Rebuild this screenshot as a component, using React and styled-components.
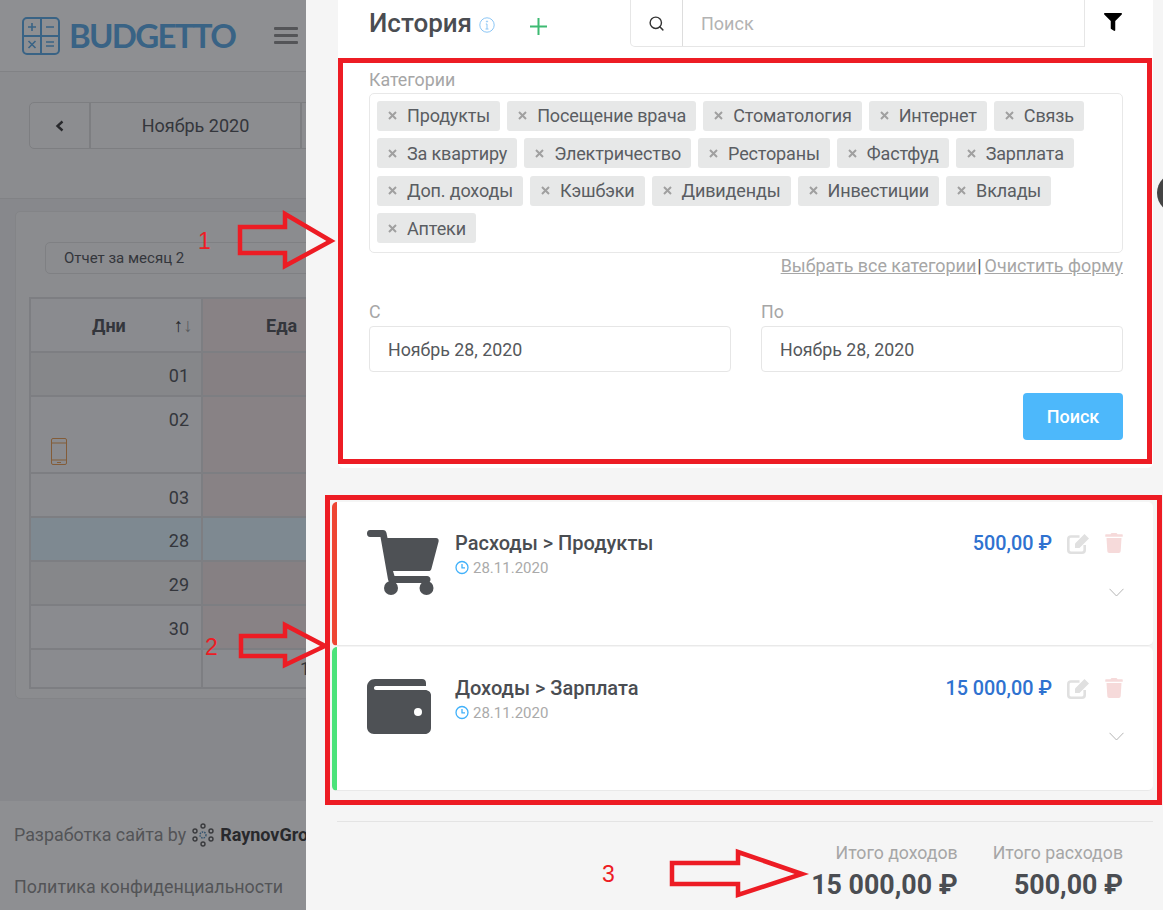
import React from "react";
import styled, { createGlobalStyle } from "styled-components";
import { FaFilter, FaTrash } from "react-icons/fa";
import { FiSearch } from "react-icons/fi";

const Global = createGlobalStyle`
  html, body { margin: 0; padding: 0; height: 910px; overflow: hidden; background: #f5f5f5; }
  body { font-family: Roboto, "Liberation Sans", sans-serif; color: #4a4d52; }
  * { box-sizing: border-box; }
`;

const Page = styled.div`
  position: relative;
  display: flex;
  width: 1163px;
  height: 910px;
  overflow: hidden;
`;

/* ---------- dimmed page behind the drawer ---------- */
const Behind = styled.div`
  position: relative;
  flex: 0 0 306px;
  height: 910px;
  overflow: hidden;
  background: #f0f1f3;
`;
const Dim = styled.div`
  position: absolute;
  inset: 0;
  background: rgba(30, 32, 38, 0.5);
`;
const BehindInner = styled.div`
  width: 1163px;
  height: 910px;
  display: flex;
  flex-direction: column;
`;
const TopBar = styled.header`
  height: 72px;
  background: #fff;
  border-bottom: 1px solid #e4e4e4;
  display: flex;
  align-items: center;
  padding-left: 22px;
`;
const Brand = styled.span`
  font-family: Lato, sans-serif;
  font-weight: 700;
  font-size: 33px;
  line-height: 1;
  color: #54a6e4;
  margin-left: 9px;
  letter-spacing: -1.7px;
`;
const Burger = styled.span`
  margin-left: 39px;
  width: 24px;
  display: flex;
  flex-direction: column;
  gap: 4px;
  i { display: block; height: 3px; background: #8b8b8b; border-radius: 1px; }
`;
const DateBand = styled.section`
  height: 127px;
  background: #f8f8f8;
  border-bottom: 1px solid #e4e4e4;
  padding: 30px 0 0 29px;
`;
const Pager = styled.div`
  display: inline-flex;
  height: 47px;
  background: #fafafa;
  border: 1px solid #dcdcdc;
  border-radius: 5px;
  font-size: 18px;
`;
const PagerCell = styled.span`
  width: ${(p) => p.$w}px;
  display: flex;
  align-items: center;
  justify-content: center;
  border-right: 2px solid #dcdcdc;
`;
const Content = styled.main`
  flex: 1;
  padding: 12px 0 0 15px;
`;
const ReportCard = styled.div`
  width: 900px;
  height: 488px;
  background: #f8f8f8;
  border: 1px solid #e8e8e8;
  border-radius: 5px;
  padding: 30px 15px 0 13px;
`;
const ReportSelect = styled.div`
  width: 400px;
  height: 32px;
  margin-left: 16px;
  border: 1px solid #e0e0e0;
  border-radius: 5px;
  font-size: 15px;
  line-height: 31px;
  padding-left: 18px;
`;
const Table = styled.div`
  margin-top: 23px;
  display: grid;
  grid-template-columns: 170px 300px;
  gap: 2px;
  background: #dcdcdf;
  width: 476px;
  border: 2px solid #dcdcdf;
`;
const DayCell = styled.div`
  height: ${(p) => p.$h}px;
  background: ${(p) => p.$bg};
  font-size: 18px;
  text-align: right;
  padding: ${(p) => p.$pad}px 12px 0 0;
  line-height: 22px;
  position: relative;
`;
const TotalDigit = styled.span`
  display: block;
  text-align: left;
  padding-left: 97px;
`;
const HeadCell = styled.div`
  height: 52px;
  background: ${(p) => p.$bg};
  font-size: 18px;
  font-weight: 700;
  display: flex;
  align-items: center;
  padding-left: ${(p) => p.$pad}px;
`;
const SortMark = styled.span`
  margin-left: 48px;
  font-size: 19px;
  font-weight: 400;
  color: #333;
  span { color: #999; }
`;
const PhoneMark = styled.svg`
  position: absolute;
  left: 20px;
  top: 41px;
`;
const BottomBar = styled.footer`
  height: 109px;
  background: #fff;
  padding: 22px 0 0 14px;
  font-size: 17.85px;
  color: #888;
  line-height: 24px;
`;
const ByLine = styled.div`
  display: flex;
  align-items: center;
  white-space: nowrap;
  strong { color: #333; font-weight: 700; margin-left: 6px; font-size: 18px; }
  svg { margin-left: 6px; }
`;
const Policy = styled.div`
  margin-top: 28px;
  white-space: nowrap;
`;

/* ---------- drawer ---------- */
const Drawer = styled.aside`
  flex: 1;
  height: 910px;
  background: #f5f5f5;
  padding: 0 10px 0 32px;
  display: flex;
  flex-direction: column;
`;
const Panel = styled.section`
  height: 468px;
  background: #fff;
  border-radius: 0 0 5px 5px;
  padding: 0 30px 0 31px;
`;
const PanelHead = styled.div`
  height: 47px;
  display: flex;
  align-items: center;
`;
const Title = styled.h2`
  margin: 0;
  font-size: 26px;
  font-weight: 500;
  color: #4a4d52;
  line-height: 47px;
`;
const InfoIcon = styled.svg`
  margin-left: 7px;
  margin-top: 3px;
`;
const PlusIcon = styled.svg`
  margin-left: 34px;
  margin-top: 6px;
`;
const SearchGroup = styled.div`
  margin-left: 82px;
  width: 455px;
  height: 47px;
  display: flex;
  border: 1px solid #e6e6e6;
  border-top: none;
  border-radius: 0 0 0 5px;
`;
const SearchAddon = styled.span`
  width: 52px;
  flex: none;
  border-right: 1px solid #ddd;
  display: flex;
  align-items: center;
  justify-content: center;
  color: #333;
`;
const SearchHint = styled.span`
  padding-left: 18px;
  font-size: 18px;
  line-height: 47px;
  color: #b3b3b3;
`;
const FilterBtn = styled.span`
  margin-left: 19px;
  color: #000;
  display: flex;
  margin-top: -3px;
`;
const FieldLabel = styled.label`
  display: block;
  font-size: 17.8px;
  line-height: 20px;
  color: #a6a6a6;
`;
const CatLabel = styled(FieldLabel)`
  margin-top: 23px;
  margin-bottom: 3px;
`;
const Chips = styled.div`
  height: 160px;
  border: 1px solid #e8e8e8;
  border-radius: 5px;
  padding: 6.8px 7px 0;
  display: flex;
  flex-wrap: wrap;
  align-content: flex-start;
  gap: 7.5px 7px;
`;
const Chip = styled.span`
  height: 30px;
  display: inline-flex;
  align-items: center;
  background: #e7e8e8;
  border-radius: 3px;
  padding: 0 10px 0 11px;
  font-size: 18px;
  letter-spacing: -0.008em;
  color: #5a5d62;
  white-space: nowrap;
  svg { margin-right: 10px; }
`;
const LinksRow = styled.div`
  margin-top: 3px;
  display: flex;
  justify-content: flex-end;
  font-size: 17.9px;
  line-height: 20px;
  color: #a6a6a6;
  a { color: #a6a6a6; text-decoration: underline; }
  b { color: #555; font-weight: 400; margin: 0 3px 0 1px; }
`;
const DatesRow = styled.div`
  margin-top: 26px;
  display: grid;
  grid-template-columns: 362px 362px;
  column-gap: 30px;
`;
const DateInput = styled.div`
  margin-top: 4px;
  height: 46px;
  border: 1px solid #e6e6e6;
  border-radius: 4px;
  padding-left: 18px;
  font-size: 17.8px;
  line-height: 45px;
  color: #55585c;
`;
const SubmitRow = styled.div`
  margin-top: 21px;
  display: flex;
  justify-content: flex-end;
`;
const Submit = styled.button`
  width: 100px;
  height: 47px;
  border: none;
  border-radius: 4px;
  background: #4db8fb;
  color: #fff;
  font: 500 18px Roboto, sans-serif;
`;
const List = styled.div`
  margin: 34px 0 0 -6px;
  display: flex;
  flex-direction: column;
`;
const Entry = styled.article`
  height: ${(p) => p.$h}px;
  margin-top: ${(p) => p.$mt || 0}px;
  background: #fff;
  border-left: 5px solid ${(p) => p.$accent};
  border-radius: 5px;
  border-bottom: 1px solid #e9e9e9;
  display: flex;
  padding: 0 29px 0 0;
`;
const EntryIcon = styled.div`
  width: 118px;
  flex: none;
  padding: ${(p) => p.$top}px 0 0 30px;
`;
const EntryMain = styled.div`
  flex: 1;
  padding-top: ${(p) => p.$top}px;
`;
const EntryTitle = styled.div`
  font-size: 20px;
  font-weight: 500;
  line-height: 24px;
  color: #4a4d52;
`;
const EntryDate = styled.div`
  margin-top: 0.5px;
  display: flex;
  align-items: center;
  gap: 4px;
  font-size: 15px;
  line-height: 24px;
  color: #aaa;
`;
const EntrySide = styled.div`
  width: 200px;
  padding-top: ${(p) => p.$top}px;
  display: flex;
  flex-direction: column;
  align-items: flex-end;
`;
const SideTop = styled.div`
  display: flex;
  align-items: center;
  height: 24px;
`;
const Amount = styled.span`
  font-size: 19.8px;
  font-weight: 500;
  color: #2f72d0;
  white-space: nowrap;
`;
const EditBtn = styled.span`
  display: flex;
  margin-left: 15px;
`;
const TrashBtn = styled.span`
  display: flex;
  margin-left: 14px;
  color: #f6dada;
`;
const Chevron = styled.svg`
  margin-top: ${(p) => p.$mt}px;
`;
const Totals = styled.div`
  margin: 30px 0 0 -1px;
  border-top: 1px solid #e4e4e4;
  padding: 20px 30px 0 0;
  display: flex;
  justify-content: flex-end;
  gap: 35px;
`;
const TotalCol = styled.div`
  text-align: right;
`;
const TotalLabel = styled.div`
  font-size: 17.7px;
  line-height: 22px;
  color: #a6a6a6;
`;
const TotalValue = styled.div`
  margin-top: 6px;
  font-size: 26.8px;
  font-weight: 700;
  line-height: 30px;
  color: #4a4d52;
  white-space: nowrap;
`;

/* ---------- things lying over the page ---------- */
const Frame = styled.div`
  position: absolute;
  left: ${(p) => p.$x}px;
  top: ${(p) => p.$y}px;
  width: ${(p) => p.$w}px;
  height: ${(p) => p.$h}px;
  border: 5px solid #ed1c24;
  pointer-events: none;
`;
const Numeral = styled.span`
  position: absolute;
  left: ${(p) => p.$x}px;
  top: ${(p) => p.$y}px;
  font-family: "Liberation Sans", sans-serif;
  font-size: 23px;
  line-height: 26px;
  color: #ed1c24;
`;
const Arrows = styled.svg`
  position: absolute;
  inset: 0;
  pointer-events: none;
`;
const Knob = styled.div`
  position: absolute;
  left: 1157px;
  top: 173px;
  width: 40px;
  height: 40px;
  border-radius: 50%;
  background: #444;
`;

const Logo = () => (
  <svg width="38" height="38" viewBox="0 0 38 38" fill="none" stroke="#54a6e4" strokeWidth="1.6">
    <rect x="1" y="1" width="36" height="36" rx="4" strokeWidth="2" />
    <path d="M19 1V37M1 19H37" strokeWidth="2" />
    <path d="M6 10H14M10 6V14M24 10H32M6.5 24L13.5 31M13.5 24L6.5 31M24 25H32M24 29H32" />
  </svg>
);
const Cross = () => (
  <svg width="9" height="9" viewBox="0 0 9 9" stroke="#a0a0a0" strokeWidth="2">
    <path d="M1 1L8 8M8 1L1 8" />
  </svg>
);
const Clock = () => (
  <svg width="14" height="15" viewBox="0 0 14 15" fill="none" stroke="#41b1fa" strokeWidth="1.3">
    <circle cx="7" cy="7.5" r="6" />
    <path d="M7 4V7.8H10" />
  </svg>
);
const ChevronDown = ({ mt }) => (
  <Chevron $mt={mt} width="15" height="9" viewBox="0 0 15 9" fill="none" stroke="#b5b5b5" strokeWidth="1">
    <path d="M0.5 0.8L7.5 8L14.5 0.8" />
  </Chevron>
);
const EditIcon = () => (
  <svg width="23" height="21" viewBox="0 0 23 21" fill="none">
    <path d="M12.500 3.500H4C2.500 3.500 1.300 4.700 1.300 6.200V17C1.300 18.500 2.500 19.700 4 19.700H15C16.500 19.700 17.700 18.500 17.700 17V12" stroke="#e0e0e0" strokeWidth="2.600" />
    <path d="M8 10.500L17.500 1L22 5.500L12.500 15H8Z" fill="#e0e0e0" />
  </svg>
);
const Cart = () => (
  <svg width="72" height="65" viewBox="0 0 72 65" fill="#4e5155">
    <path d="M3 0H16C18 0 19 1 19.5 3L20.5 8H69C71 8 72 9.5 71.6 11.5L64.5 38.5C64 40.5 63 41 61.5 41H26L27.5 46H60C62 46 63.5 47.5 63.5 49.5C63.5 51.5 62 53 60 53H25C23 53 21.5 52 21 49.5L13.5 7H3C1 7 0 5.5 0 3.5C0 1.5 1 0 3 0Z" />
    <circle cx="24" cy="58" r="7" />
    <circle cx="59.500" cy="58" r="7" />
  </svg>
);
const Wallet = () => (
  <svg width="64" height="55" viewBox="0 0 64 55" fill="#4e5155">
    <path d="M8 0H55C57.500 0 59 1.500 59 4V7H9C7.500 7 7 8 7 9C7 10 7.500 11 9 11H58C61.500 11 64 13.500 64 16V49C64 52.500 61.500 55 58 55H7C3 55 0 52 0 48V8C0 3.500 3.500 0 8 0Z" />
    <circle cx="51" cy="33" r="4" fill="#fff" />
  </svg>
);
const Group = () => (
  <svg width="22" height="24" viewBox="0 0 22 24" fill="none" stroke="#555" strokeWidth="1.4">
    <circle cx="11" cy="3" r="2" /><circle cx="11" cy="21" r="2" />
    <circle cx="3" cy="8" r="2" /><circle cx="19" cy="8" r="2" />
    <circle cx="3" cy="16" r="2" /><circle cx="19" cy="16" r="2" />
    <circle cx="11" cy="12" r="3" stroke="#4a88b8" strokeDasharray="1.5 1" />
  </svg>
);

const chips = [
  "Продукты", "Посещение врача", "Стоматология", "Интернет", "Связь", "За квартиру",
  "Электричество", "Рестораны", "Фастфуд", "Зарплата", "Доп. доходы", "Кэшбэки",
  "Дивиденды", "Инвестиции", "Вклады", "Аптеки",
];
const rows = [
  { d: "01", h: 42, pad: 12, a: "#eeeeef", b: "#eee0e0" },
  { d: "02", h: 75, pad: 12, a: "#f6f7f8", b: "#f2e4e4", phone: true },
  { d: "03", h: 42, pad: 13, a: "#f6f7f8", b: "#f2e4e4" },
  { d: "28", h: 42, pad: 12, a: "#dff2fc", b: "#dff2fc" },
  { d: "29", h: 42, pad: 12, a: "#eeeeef", b: "#eee0e0" },
  { d: "30", h: 42, pad: 12, a: "#f6f7f8", b: "#f2e4e4" },
];

export default function App() {
  return (
    <Page>
      <Global />
      <Behind>
        <BehindInner>
          <TopBar>
            <Logo />
            <Brand>BUDGETTO</Brand>
            <Burger><i /><i /><i /></Burger>
          </TopBar>
          <DateBand>
            <Pager>
              <PagerCell $w={61}>
                <svg width="10" height="12" viewBox="0 0 10 12" fill="none" stroke="#333" strokeWidth="2.400"><path d="M7.500 1.500L2.500 6L7.500 10.500" /></svg>
              </PagerCell>
              <PagerCell $w={211}>Ноябрь 2020</PagerCell>
              <PagerCell $w={60} />
            </Pager>
          </DateBand>
          <Content>
            <ReportCard>
              <ReportSelect>Отчет за месяц 2</ReportSelect>
              <Table>
                <HeadCell $bg="#f6f7f8" $pad={61}>
                  Дни<SortMark>↑<span>↓</span></SortMark>
                </HeadCell>
                <HeadCell $bg="#f2e4e4" $pad={63}>Еда</HeadCell>
                {rows.map((r) => (
                  <React.Fragment key={r.d}>
                    <DayCell $h={r.h} $pad={r.pad} $bg={r.a}>
                      {r.d}
                      {r.phone && (
                        <PhoneMark width="16" height="27" viewBox="0 0 16 27" fill="none" stroke="#e8994a" strokeWidth="1">
                          <rect x="0.500" y="0.500" width="15" height="26" rx="1.500" />
                          <path d="M0.500 5H15.500M0.500 22H15.500M6 24.500H10" />
                        </PhoneMark>
                      )}
                    </DayCell>
                    <DayCell $h={r.h} $pad={r.pad} $bg={r.b} />
                  </React.Fragment>
                ))}
                <DayCell $h={37} $pad={8} $bg="#f6f7f8" />
                <DayCell $h={37} $pad={8} $bg="#f6f7f8">
                  <TotalDigit>1</TotalDigit>
                </DayCell>
              </Table>
            </ReportCard>
          </Content>
          <BottomBar>
            <ByLine>
              Разработка сайта by<Group /><strong>RaynovGroup</strong>
            </ByLine>
            <Policy>Политика конфиденциальности</Policy>
          </BottomBar>
        </BehindInner>
        <Dim />
      </Behind>

      <Drawer>
        <Panel>
          <PanelHead>
            <Title>История</Title>
            <InfoIcon width="16" height="16" viewBox="0 0 16 16" fill="none" stroke="#8cc6f5" strokeWidth="1">
              <circle cx="8" cy="8" r="7.200" />
              <path d="M8 7V12M6.500 12H9.500M6.800 7H8" />
              <circle cx="8" cy="4.500" r="0.600" />
            </InfoIcon>
            <PlusIcon width="19" height="19" viewBox="0 0 19 19" stroke="#3dba72" strokeWidth="2">
              <path d="M9.500 1V18M1 9.500H18" />
            </PlusIcon>
            <SearchGroup>
              <SearchAddon><FiSearch size={17} /></SearchAddon>
              <SearchHint>Поиск</SearchHint>
            </SearchGroup>
            <FilterBtn><FaFilter size={18} /></FilterBtn>
          </PanelHead>
          <CatLabel>Категории</CatLabel>
          <Chips>
            {chips.map((c) => (
              <Chip key={c}><Cross />{c}</Chip>
            ))}
          </Chips>
          <LinksRow>
            <a>Выбрать все категории</a><b>|</b><a>Очистить форму</a>
          </LinksRow>
          <DatesRow>
            <div>
              <FieldLabel>С</FieldLabel>
              <DateInput>Ноябрь 28, 2020</DateInput>
            </div>
            <div>
              <FieldLabel>По</FieldLabel>
              <DateInput>Ноябрь 28, 2020</DateInput>
            </div>
          </DatesRow>
          <SubmitRow><Submit>Поиск</Submit></SubmitRow>
        </Panel>

        <List>
          <Entry $h={144} $accent="#ee4533">
            <EntryIcon $top={28}><Cart /></EntryIcon>
            <EntryMain $top={29}>
              <EntryTitle>Расходы &gt; Продукты</EntryTitle>
              <EntryDate><Clock />28.11.2020</EntryDate>
            </EntryMain>
            <EntrySide $top={29}>
              <SideTop>
                <Amount>500,00 ₽</Amount>
                <EditBtn><EditIcon /></EditBtn>
                <TrashBtn><FaTrash size={20} /></TrashBtn>
              </SideTop>
              <ChevronDown mt={33} />
            </EntrySide>
          </Entry>
          <Entry $h={144} $mt={1} $accent="#4be37a">
            <EntryIcon $top={32}><Wallet /></EntryIcon>
            <EntryMain $top={29}>
              <EntryTitle>Доходы &gt; Зарплата</EntryTitle>
              <EntryDate><Clock />28.11.2020</EntryDate>
            </EntryMain>
            <EntrySide $top={29}>
              <SideTop>
                <Amount>15 000,00 ₽</Amount>
                <EditBtn><EditIcon /></EditBtn>
                <TrashBtn><FaTrash size={20} /></TrashBtn>
              </SideTop>
              <ChevronDown mt={32} />
            </EntrySide>
          </Entry>
        </List>

        <Totals>
          <TotalCol>
            <TotalLabel>Итого доходов</TotalLabel>
            <TotalValue>15 000,00 ₽</TotalValue>
          </TotalCol>
          <TotalCol>
            <TotalLabel>Итого расходов</TotalLabel>
            <TotalValue>500,00 ₽</TotalValue>
          </TotalCol>
        </Totals>
      </Drawer>

      <Knob />
      <Frame $x={338} $y={58} $w={814} $h={406} />
      <Frame $x={325} $y={495} $w={837} $h={310} />
      <Arrows width="1163" height="910" viewBox="0 0 1163 910" fill="none" stroke="#ed1c24" strokeWidth="4.500">
        <path d="M240 227H285V214L331 241L285 266V253H240Z" />
        <path d="M241 636H285V625L325 646L285 665V656H241Z" />
        <path d="M672 863H738V852L802 874L738 895V884H672Z" />
      </Arrows>
      <Numeral $x={198} $y={228}>1</Numeral>
      <Numeral $x={205} $y={634}>2</Numeral>
      <Numeral $x={602} $y={861}>3</Numeral>
    </Page>
  );
}
